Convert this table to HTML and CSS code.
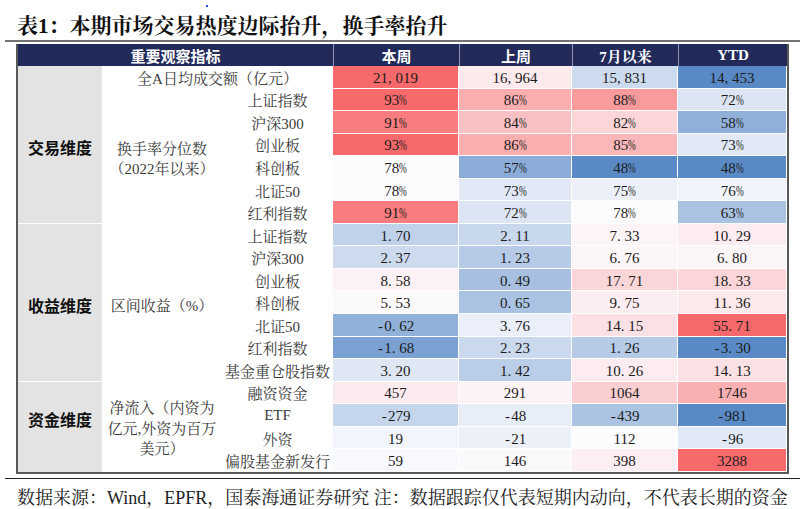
FILE: index.html
```html
<!DOCTYPE html>
<html lang="zh-CN">
<head>
<meta charset="utf-8">
<title>表1：本期市场交易热度边际抬升，换手率抬升</title>
<link rel="stylesheet" href="styles.css">
</head>
<body>
<span class="dot"></span>
<div class="title-bar"><h1 class="title">表<span class="tnum">1</span>：本期市场交易热度边际抬升，换手率抬升</h1></div>

<div class="sheet">
  <div class="hd hd-main">重要观察指标</div>
  <div class="hd">本周</div>
  <div class="hd">上周</div>
  <div class="hd hd-serif">7月以来</div>
  <div class="hd hd-serif">YTD</div>

  <!-- 交易维度 -->
  <div class="cat cat-trade">交易维度</div>
  <div class="lbl wide">全A日均成交额（亿元）</div>
  <div class="v" style="background:#f8696b">21<span class="p">,</span>019</div>
  <div class="v" style="background:#fceaed">16<span class="p">,</span>964</div>
  <div class="v" style="background:#cddbee">15<span class="p">,</span>831</div>
  <div class="v" style="background:#5a8ac6">14<span class="p">,</span>453</div>

  <div class="lbl group grp-turnover">换手率分位数<br>（2022年以来）</div>
  <div class="lbl">上证指数</div>
  <div class="v" style="background:#f8696b">93<span class="pc">%</span></div>
  <div class="v" style="background:#faaeb0">86<span class="pc">%</span></div>
  <div class="v" style="background:#f99a9c">88<span class="pc">%</span></div>
  <div class="v" style="background:#dce5f4">72<span class="pc">%</span></div>

  <div class="lbl">沪深300</div>
  <div class="v" style="background:#f97d7f">91<span class="pc">%</span></div>
  <div class="v" style="background:#fac1c4">84<span class="pc">%</span></div>
  <div class="v" style="background:#fbd5d8">82<span class="pc">%</span></div>
  <div class="v" style="background:#90b0d9">58<span class="pc">%</span></div>

  <div class="lbl">创业板</div>
  <div class="v" style="background:#f8696b">93<span class="pc">%</span></div>
  <div class="v" style="background:#faaeb0">86<span class="pc">%</span></div>
  <div class="v" style="background:#fab7ba">85<span class="pc">%</span></div>
  <div class="v" style="background:#e1e9f6">73<span class="pc">%</span></div>

  <div class="lbl">科创板</div>
  <div class="v" style="background:#fcfcff">78<span class="pc">%</span></div>
  <div class="v" style="background:#8bacd7">57<span class="pc">%</span></div>
  <div class="v" style="background:#5a8ac6">48<span class="pc">%</span></div>
  <div class="v" style="background:#5a8ac6">48<span class="pc">%</span></div>

  <div class="lbl">北证50</div>
  <div class="v" style="background:#fcfcff">78<span class="pc">%</span></div>
  <div class="v" style="background:#e1e9f6">73<span class="pc">%</span></div>
  <div class="v" style="background:#ecf1f9">75<span class="pc">%</span></div>
  <div class="v" style="background:#f1f4fb">76<span class="pc">%</span></div>

  <div class="lbl">红利指数</div>
  <div class="v" style="background:#f97d7f">91<span class="pc">%</span></div>
  <div class="v" style="background:#dce5f4">72<span class="pc">%</span></div>
  <div class="v" style="background:#fcfcff">78<span class="pc">%</span></div>
  <div class="v" style="background:#abc3e3">63<span class="pc">%</span></div>

  <!-- 收益维度 -->
  <div class="cat cat-return">收益维度</div>
  <div class="lbl group grp-return">区间收益（%）</div>
  <div class="lbl">上证指数</div>
  <div class="v" style="background:#c0d2ea">1<span class="p">.</span>70</div>
  <div class="v" style="background:#c8d8ed">2<span class="p">.</span>11</div>
  <div class="v" style="background:#fcf4f7">7<span class="p">.</span>33</div>
  <div class="v" style="background:#fcecef">10<span class="p">.</span>29</div>

  <div class="lbl">沪深300</div>
  <div class="v" style="background:#cedbef">2<span class="p">.</span>37</div>
  <div class="v" style="background:#b6cbe7">1<span class="p">.</span>23</div>
  <div class="v" style="background:#fcf6f9">6<span class="p">.</span>76</div>
  <div class="v" style="background:#fcf6f9">6<span class="p">.</span>80</div>

  <div class="lbl">创业板</div>
  <div class="v" style="background:#fcf1f4">8<span class="p">.</span>58</div>
  <div class="v" style="background:#a7c0e1">0<span class="p">.</span>49</div>
  <div class="v" style="background:#fbd6d9">17<span class="p">.</span>71</div>
  <div class="v" style="background:#fbd5d7">18<span class="p">.</span>33</div>

  <div class="lbl">科创板</div>
  <div class="v" style="background:#fcf9fc">5<span class="p">.</span>53</div>
  <div class="v" style="background:#abc3e2">0<span class="p">.</span>65</div>
  <div class="v" style="background:#fcedf0">9<span class="p">.</span>75</div>
  <div class="v" style="background:#fce9ec">11<span class="p">.</span>36</div>

  <div class="lbl">北证50</div>
  <div class="v" style="background:#91b1d9"><span class="m">-</span>0<span class="p">.</span>62</div>
  <div class="v" style="background:#eaeff9">3<span class="p">.</span>76</div>
  <div class="v" style="background:#fbe1e4">14<span class="p">.</span>15</div>
  <div class="v" style="background:#f8696b">55<span class="p">.</span>71</div>

  <div class="lbl">红利指数</div>
  <div class="v" style="background:#7ba1d2"><span class="m">-</span>1<span class="p">.</span>68</div>
  <div class="v" style="background:#cbd9ee">2<span class="p">.</span>23</div>
  <div class="v" style="background:#b7cbe7">1<span class="p">.</span>26</div>
  <div class="v" style="background:#5a8ac6"><span class="m">-</span>3<span class="p">.</span>30</div>

  <div class="lbl">基金重仓股指数</div>
  <div class="v" style="background:#dfe7f5">3<span class="p">.</span>20</div>
  <div class="v" style="background:#bacee8">1<span class="p">.</span>42</div>
  <div class="v" style="background:#fcecef">10<span class="p">.</span>26</div>
  <div class="v" style="background:#fbe1e4">14<span class="p">.</span>13</div>

  <!-- 资金维度 -->
  <div class="cat cat-flow">资金维度</div>
  <div class="lbl group grp-flow">净流入（内资为<br>亿元,外资为百万<br>美元）</div>
  <div class="lbl">融资资金</div>
  <div class="v" style="background:#fcebee">457</div>
  <div class="v" style="background:#fcf3f6">291</div>
  <div class="v" style="background:#fbcfd2">1064</div>
  <div class="v" style="background:#fab0b2">1746</div>

  <div class="lbl">ETF</div>
  <div class="v" style="background:#c5d5ec"><span class="m">-</span>279</div>
  <div class="v" style="background:#e8eef8"><span class="m">-</span>48</div>
  <div class="v" style="background:#acc4e3"><span class="m">-</span>439</div>
  <div class="v" style="background:#5a8ac6"><span class="m">-</span>981</div>

  <div class="lbl">外资</div>
  <div class="v" style="background:#f2f5fb">19</div>
  <div class="v" style="background:#ecf1f9"><span class="m">-</span>21</div>
  <div class="v" style="background:#fcfbfe">112</div>
  <div class="v" style="background:#e0e9f5"><span class="m">-</span>96</div>

  <div class="lbl">偏股基金新发行</div>
  <div class="v" style="background:#f8f9fe">59</div>
  <div class="v" style="background:#fcf9fc">146</div>
  <div class="v" style="background:#fceef1">398</div>
  <div class="v" style="background:#f8696b">3288</div>
</div>

<p class="foot">数据来源：Wind，EPFR，国泰海通证券研究 注：数据跟踪仅代表短期内动向，不代表长期的资金</p>
</body>
</html>
```

FILE: styles.css
```css
* {
  box-sizing: border-box;
  margin: 0;
  padding: 0;
}

body {
  position: relative;
  width: 805px;
  height: 509px;
  overflow: hidden;
  background: #ffffff;
  color: #222222;
  font-family: "Liberation Serif", "Noto Serif CJK SC", "Noto Sans CJK SC", serif;
}

.dot {
  position: absolute;
  left: 206px;
  top: 5px;
  width: 2px;
  height: 2px;
  background: #2a4ed8;
}

/* ---------- title ---------- */
.title-bar {
  margin: 0 5px;
  height: 42px;
  padding: 8px 0 0 12px;
  border-bottom: 2px solid #737373;
}

.title {
  font-family: "Noto Serif CJK SC", "Noto Sans CJK SC", sans-serif;
  font-size: 21px;
  font-weight: 700;
  line-height: 32px;
  color: #111111;
  white-space: nowrap;
}

.tnum {
  font-family: "Liberation Serif", serif;
  font-weight: 700;
}

/* ---------- table ---------- */
.sheet {
  display: grid;
  grid-template-columns: 84px 120px 111px 126px 113px 106px 109px;
  grid-template-rows: 22px repeat(18, 22.56px);
  width: 773px;
  margin: 2px 0 0 16px;
  border: 2px solid #595959;
  border-top: 0;
}

.hd {
  display: flex;
  align-items: center;
  justify-content: center;
  background: #212a59;
  color: #ffffff;
  font-family: "Noto Sans CJK SC", sans-serif;
  font-size: 15px;
  font-weight: 700;
  border-left: 1px solid #8e94b4;
}

.hd-main {
  grid-column: span 3;
  border-left: 0;
}

.hd-serif {
  font-family: "Liberation Serif", "Noto Serif CJK SC", "Noto Sans CJK SC", serif;
  font-size: 15px;
}

.cat {
  display: flex;
  align-items: center;
  justify-content: center;
  background: #e3e3e3;
  border-bottom: 1px solid #ffffff;
  font-family: "Noto Sans CJK SC", sans-serif;
  font-size: 16px;
  font-weight: 700;
  color: #111111;
}

.cat-trade {
  grid-row: span 7;
  padding-top: 6px;
}

.cat-return {
  grid-row: span 7;
  padding-top: 5px;
}

.cat-flow {
  grid-row: span 4;
  padding-bottom: 15px;
  border-bottom: 0;
}

.lbl {
  display: flex;
  align-items: center;
  justify-content: center;
  text-align: center;
  font-size: 15px;
  color: #3a3a3a;
  white-space: nowrap;
}

.wide {
  grid-column: span 2;
}

.group {
  line-height: 20px;
}

.grp-turnover {
  grid-row: span 6;
  padding-top: 5px;
}

.grp-return {
  grid-row: span 7;
  padding-top: 6px;
}

.grp-flow {
  grid-row: span 4;
  line-height: 20.5px;
  padding-top: 4px;
}

.v {
  display: flex;
  align-items: center;
  justify-content: center;
  padding-top: 3px;
  border-right: 1px solid #ffffff;
  border-bottom: 1px solid #ffffff;
  font-size: 15px;
  color: #1c1c1c;
  white-space: nowrap;
}

.p {
  display: inline-block;
  width: 0.5em;
  text-align: left;
}

.m {
  display: inline-block;
  width: 0.5em;
  text-align: center;
}

.pc {
  display: inline-block;
  width: 0.5em;
  transform: scaleX(0.62);
  transform-origin: left center;
}

/* ---------- footer ---------- */
.foot {
  margin: 4px 5px 0;
  padding: 4px 0 0 12px;
  border-top: 1.5px solid #222222;
  font-size: 18px;
  line-height: 30px;
  color: #222222;
  white-space: nowrap;
}
```
